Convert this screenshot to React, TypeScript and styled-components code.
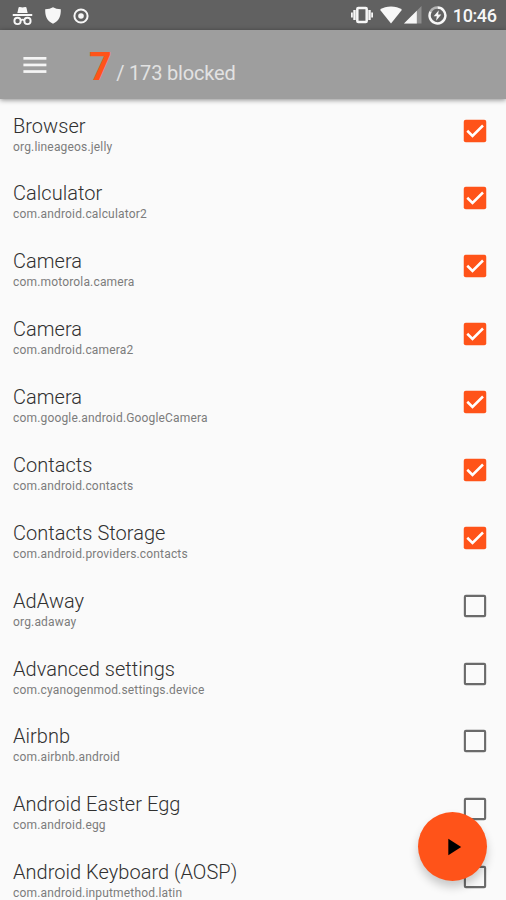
import React from "react";
import styled, { createGlobalStyle } from "styled-components";

const ACCENT = "#ff5319";

const GlobalStyle = createGlobalStyle`
  * { box-sizing: border-box; }
  body { margin: 0; background: #fafafa; overflow: hidden; }
`;

const Screen = styled.div`
  width: 506px;
  height: 900px;
  display: flex;
  flex-direction: column;
  overflow: hidden;
  position: relative;
  background: #fafafa;
  font-family: Roboto, "Liberation Sans", sans-serif;
`;

const StatusBar = styled.div`
  height: 30px;
  flex: none;
  display: flex;
  align-items: center;
  justify-content: space-between;
  padding: 0 9.5px 0 12px;
  background: #616161;
  color: #f7f7f7;
`;

const IconGroup = styled.div`
  display: flex;
  align-items: center;
  svg { display: block; }
`;

const Notifications = styled(IconGroup)`
  gap: 12px;
  padding-top: 1px;
`;

const SignalPair = styled(IconGroup)`
  gap: 2px;
`;

const SystemIcons = styled(IconGroup)`
  gap: 6px;
`;

const Clock = styled.span`
  font-size: 18px;
  line-height: 30px;
  font-weight: 500;
  letter-spacing: -0.4px;
  padding-top: 1px;
`;

const Toolbar = styled.header`
  height: 68.5px;
  flex: none;
  display: flex;
  align-items: flex-start;
  padding-left: 23px;
  background: #9e9e9e;
  box-shadow: 0 1px 5px rgba(0, 0, 0, 0.45);
  z-index: 1;
`;

const MenuButton = styled.button`
  width: 24px;
  height: 69px;
  padding: 0;
  border: 0;
  background: none;
  display: flex;
  align-items: center;
`;

const Counter = styled.div`
  display: flex;
  align-items: baseline;
  margin-left: 42px;
  padding-top: 13px;
  line-height: 48px;
`;

const Blocked = styled.span`
  font-size: 39.5px;
  font-weight: 700;
  color: ${ACCENT};
`;

const Total = styled.span`
  margin-left: 4.5px;
  font-size: 20px;
  letter-spacing: -0.18px;
  color: #e2e2e2;
`;

const AppList = styled.ul`
  margin: 0;
  padding: 15.1px 16px 0 13px;
  list-style: none;
`;

const AppRow = styled.li`
  height: 67.88px;
  display: flex;
  justify-content: space-between;
  align-items: flex-start;
`;

const Labels = styled.div`
  display: flex;
  flex-direction: column;
`;

const Title = styled.span`
  font-size: 20px;
  line-height: 25px;
  font-weight: 300;
  letter-spacing: 0.03px;
  color: #303030;
`;

const PackageName = styled.span`
  font-size: 12px;
  line-height: 17px;
  letter-spacing: 0.17px;
  color: #7c7c7c;
`;

const CheckSvg = styled.svg`
  display: block;
  width: 30px;
  height: 30px;
  margin-top: 2px;
`;

const Fab = styled.button`
  position: absolute;
  left: 418px;
  top: 812px;
  width: 69px;
  height: 69px;
  padding: 0;
  border: 0;
  border-radius: 50%;
  display: flex;
  align-items: center;
  justify-content: center;
  background: ${ACCENT};
  box-shadow: 0 6px 10px rgba(0, 0, 0, 0.2);
  z-index: 2;
`;

const apps: [string, string, boolean][] = [
  ["Browser", "org.lineageos.jelly", true],
  ["Calculator", "com.android.calculator2", true],
  ["Camera", "com.motorola.camera", true],
  ["Camera", "com.android.camera2", true],
  ["Camera", "com.google.android.GoogleCamera", true],
  ["Contacts", "com.android.contacts", true],
  ["Contacts Storage", "com.android.providers.contacts", true],
  ["AdAway", "org.adaway", false],
  ["Advanced settings", "com.cyanogenmod.settings.device", false],
  ["Airbnb", "com.airbnb.android", false],
  ["Android Easter Egg", "com.android.egg", false],
  ["Android Keyboard (AOSP)", "com.android.inputmethod.latin", false],
];

const Checkbox = ({ checked }: { checked: boolean }) => (
  <CheckSvg viewBox="0 0 24 24" role="checkbox" aria-checked={checked}>
    {checked ? (
      <>
        <rect x="3" y="3" width="18" height="18" rx="1.6" fill={ACCENT} />
        <path d="M5.8 11.8L10 16l8.4-8.4" fill="none" stroke="#fff" strokeWidth="2" />
      </>
    ) : (
      <rect x="3.9" y="3.9" width="16.2" height="16.2" rx="0.8" fill="none" stroke="#6a6a6a" strokeWidth="1.7" />
    )}
  </CheckSvg>
);

const Incognito = () => (
  <svg width="21" height="20" viewBox="0 0 22 20" fill="currentColor">
    <path d="M5.6 6.8L6.9 1.2Q7.2.3 8.2.5L11 1.2l2.8-.7q1-.2 1.3.7l1.3 5.6z" />
    <rect x="0.8" y="7.9" width="20.4" height="2.1" />
    <circle cx="5.8" cy="15.2" r="3.3" fill="none" stroke="currentColor" strokeWidth="2" />
    <circle cx="16.2" cy="15.2" r="3.3" fill="none" stroke="currentColor" strokeWidth="2" />
    <path d="M9 14.6q2-1.5 4 0" fill="none" stroke="currentColor" strokeWidth="1.8" />
  </svg>
);

const Shield = () => (
  <svg width="16" height="17" viewBox="0 0 16 17" fill="currentColor">
    <path d="M8 .3Q11 2.2 15.8 2.3C16 9 14.2 14 8 16.7 1.8 14 0 9 .2 2.3Q5 2.2 8 .3z" />
  </svg>
);

const Target = () => (
  <svg width="16" height="16" viewBox="0 0 16 16">
    <circle cx="8" cy="8" r="6.6" fill="none" stroke="currentColor" strokeWidth="2" />
    <circle cx="8" cy="8" r="2.8" fill="currentColor" />
  </svg>
);

const Vibrate = () => (
  <svg width="24" height="18" viewBox="0 0 24 18" fill="none" stroke="currentColor">
    <rect x="7.3" y="2.1" width="9.4" height="13.8" rx="1" strokeWidth="2.5" />
    <path d="M4.5 4v10M19.5 4v10" strokeWidth="2.4" />
    <path d="M1.9 6.5v5M22.1 6.5v5" strokeWidth="1.8" />
  </svg>
);

const Wifi = () => (
  <svg width="22" height="18" viewBox="0 0 22 18" fill="currentColor">
    <path d="M11 17.5L0 3.8Q4.8.5 11 .5t11 3.3z" />
  </svg>
);

const Signal = () => (
  <svg width="18" height="18" viewBox="0 0 18 18" fill="currentColor">
    <path d="M0 17.5L17.5 0v17.5z" opacity="0.3" />
    <path d="M0 17.5L12.8 4.7v12.8z" />
  </svg>
);

const Charging = () => (
  <svg width="19" height="19" viewBox="0 0 19 19">
    <path d="M9.5 1.6A7.9 7.9 0 1 1 2.6 5.6" fill="none" stroke="currentColor" strokeWidth="2.5" />
    <path d="M2.6 5.6A7.9 7.9 0 0 1 9.5 1.6" fill="none" stroke="currentColor" strokeWidth="2.5" opacity="0.55" />
    <path d="M10.8 4.3L5.7 10.2h3.1l-.7 4.5 5.2-6.1h-3.2z" fill="currentColor" />
  </svg>
);

export default function App() {
  return (
    <Screen>
      <GlobalStyle />
      <StatusBar>
        <Notifications>
          <Incognito />
          <Shield />
          <Target />
        </Notifications>
        <SystemIcons>
          <Vibrate />
          <SignalPair>
            <Wifi />
            <Signal />
          </SignalPair>
          <Charging />
          <Clock>10:46</Clock>
        </SystemIcons>
      </StatusBar>
      <Toolbar>
        <MenuButton aria-label="Menu">
          <svg width="24" height="18" viewBox="0 0 24 18" fill="#f5f5f5">
            <rect x="0.4" y="1" width="23" height="2.7" />
            <rect x="0.4" y="7.6" width="23" height="2.7" />
            <rect x="0.4" y="14.2" width="23" height="2.7" />
          </svg>
        </MenuButton>
        <Counter>
          <Blocked>7</Blocked>
          <Total>/ 173 blocked</Total>
        </Counter>
      </Toolbar>
      <AppList>
        {apps.map(([title, pkg, checked]) => (
          <AppRow key={pkg}>
            <Labels>
              <Title>{title}</Title>
              <PackageName>{pkg}</PackageName>
            </Labels>
            <Checkbox checked={checked} />
          </AppRow>
        ))}
      </AppList>
      <Fab aria-label="Start">
        <svg width="28" height="28" viewBox="0 0 24 24">
          <path d="M8 5v14l11-7z" fill="#000" />
        </svg>
      </Fab>
    </Screen>
  );
}
